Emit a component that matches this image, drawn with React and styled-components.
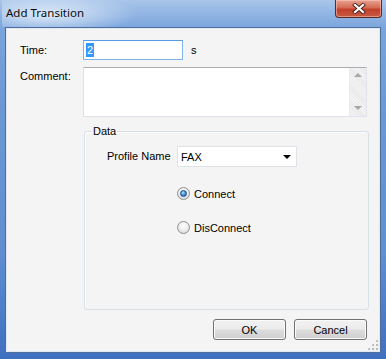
import styled, { createGlobalStyle } from 'styled-components';

const GlobalStyle = createGlobalStyle`
  html, body {
    margin: 0;
    padding: 0;
    background: #ffffff;
  }
  * {
    box-sizing: border-box;
  }
`;

const Window = styled.div`
  position: relative;
  width: 386px;
  height: 359px;
  display: flex;
  flex-direction: column;
  padding: 0 5px 6px 5px;
  background: linear-gradient(180deg, #a9c5ea 0%, #79a4dc 8%, #6b98d4 30%, #5f8fd0 70%, #3f6fbf 100%);
  font-family: 'Liberation Sans', Arial, sans-serif;
  font-size: 11px;
  color: #000;
`;

const TitleBar = styled.div`
  height: 27px;
  display: flex;
  align-items: flex-start;
  justify-content: space-between;
  margin: 0 -1px 0 -3px;
  background: radial-gradient(ellipse 90px 22px at 45px 14px, rgba(235, 243, 252, 0.85), rgba(235, 243, 252, 0) 100%);
`;

const Title = styled.span`
  font-family: 'Noto Sans', 'Open Sans', sans-serif;
  font-size: 11.5px;
  line-height: 16px;
  margin-top: 5px;
  padding-left: 4px;
  color: #0b0b0b;
`;

const CloseButton = styled.div`
  width: 47px;
  height: 18px;
  border: 1px solid #5a2a25;
  border-top: none;
  border-radius: 0 0 4px 4px;
  background: linear-gradient(180deg, #e8a290 0%, #d46b54 45%, #c1402a 55%, #c75a42 100%);
  box-shadow: inset 0 0 0 1px rgba(255, 210, 200, 0.5);
  display: flex;
  align-items: center;
  justify-content: center;
`;

const Client = styled.div`
  position: relative;
  flex: 1;
  background: #f4f4f4;
  border: 1px solid #4d6f9c;
  box-shadow: inset 0 0 0 1px #dfe8f3;
  padding: 12px 13px 0 14px;
  display: flex;
  flex-direction: column;
`;

const Row = styled.div`
  display: flex;
  align-items: ${(p) => (p.$top ? 'flex-start' : 'center')};
  margin-top: ${(p) => p.$gap || 0}px;
`;

const Label = styled.div`
  width: ${(p) => p.$w}px;
  flex: none;
  line-height: 13px;
  padding-top: ${(p) => p.$pt || 0}px;
`;

const TextBox = styled.div`
  width: 100px;
  height: 20px;
  background: #fff;
  border: 1px solid #7eb4ea;
  border-top-color: #569de5;
  display: flex;
  align-items: center;
  padding-left: 2px;
`;

const Selected = styled.span`
  background: #3399ff;
  color: #fff;
  line-height: 14px;
  padding: 0 1px;
`;

const Unit = styled.span`
  margin-left: 8px;
`;

const Memo = styled.div`
  width: 285px;
  height: 50px;
  background: #fff;
  border: 1px solid #e2e3ea;
  border-top-color: #abadb3;
  display: flex;
  justify-content: flex-end;
`;

const ScrollBar = styled.div`
  width: 17px;
  height: 100%;
  display: flex;
  flex-direction: column;
  justify-content: space-between;
  align-items: center;
  padding: 5px 0 6px;
  background: repeating-linear-gradient(45deg, #f3f3f3 0 1px, #e9e9e9 1px 2px);
  border-left: 1px solid #ececec;
`;

const Arrow = styled.div`
  width: 0;
  height: 0;
  border-left: ${(p) => p.$s}px solid transparent;
  border-right: ${(p) => p.$s}px solid transparent;
  ${(p) => (p.$up ? 'border-bottom' : 'border-top')}: ${(p) => p.$h}px solid ${(p) => p.$c};
`;

const Group = styled.fieldset`
  margin: 8px 0 0 64px;
  width: 285px;
  height: 185px;
  padding: 0 0 0 22px;
  border: 1px solid #d5dfe5;
  border-radius: 3px;
  box-shadow: inset 1px 1px 0 #fff;
`;

const Legend = styled.legend`
  margin-left: -16px;
  padding: 0 1px 0 2px;
  line-height: 13px;
  font-size: 11px;
`;

const Combo = styled.div`
  width: 120px;
  height: 21px;
  background: #fff;
  border: 1px solid #dfe3e8;
  display: flex;
  align-items: center;
  justify-content: space-between;
  padding: 0 5px 0 3px;
`;

const RadioRow = styled.div`
  display: flex;
  align-items: center;
  margin: ${(p) => p.$gap}px 0 0 70px;
  height: 13px;
`;

const RadioDot = styled.div`
  width: 13px;
  height: 13px;
  border-radius: 50%;
  border: 1px solid #8e8f8f;
  background: radial-gradient(circle at 50% 35%, #ffffff 0%, #ececec 50%, #cfcfcf 100%);
  display: flex;
  align-items: center;
  justify-content: center;
  margin-right: 4px;

  &::after {
    content: '';
    width: 7px;
    height: 7px;
    border-radius: 50%;
    display: ${(p) => (p.$on ? 'block' : 'none')};
    background: radial-gradient(circle at 40% 35%, #bfe2ff 0%, #4796d8 45%, #1b5ea8 100%);
    border: 1px solid #1f4f8c;
    box-sizing: border-box;
  }
`;

const ButtonBar = styled.div`
  display: flex;
  justify-content: flex-end;
  gap: 8px;
  margin-top: 9px;
`;

const Button = styled.div`
  width: 73px;
  height: 21px;
  border: 1px solid #707070;
  border-radius: 3px;
  background: linear-gradient(180deg, #f2f2f2 0%, #ebebeb 48%, #dddddd 52%, #cfcfcf 100%);
  box-shadow: inset 0 0 0 1px #fbfbfb;
  display: flex;
  align-items: center;
  justify-content: center;
  font-size: 11px;
`;

const Grip = styled.div`
  position: absolute;
  right: 2px;
  bottom: 2px;
  width: 11px;
  height: 11px;
  background-image: radial-gradient(circle, #b9b9b9 0 1px, transparent 1.2px);
  background-size: 4px 4px;
  clip-path: polygon(100% 0, 100% 100%, 0 100%);
`;

function CloseGlyph() {
  return (
    <svg width="14" height="11" viewBox="0 0 14 11">
      <path d="M3 2 L11 9 M11 2 L3 9" stroke="#4b2520" strokeWidth="4" strokeLinecap="square" />
      <path d="M3 2 L11 9 M11 2 L3 9" stroke="#ffffff" strokeWidth="2.2" strokeLinecap="square" />
    </svg>
  );
}

export default function App() {
  return (
    <>
      <GlobalStyle />
      <Window>
        <TitleBar>
          <Title>Add Transition</Title>
          <CloseButton>
            <CloseGlyph />
          </CloseButton>
        </TitleBar>
        <Client>
          <Row>
            <Label $w={63}>Time:</Label>
            <TextBox>
              <Selected>2</Selected>
            </TextBox>
            <Unit>s</Unit>
          </Row>
          <Row $top $gap={7}>
            <Label $w={63} $pt={3}>Comment:</Label>
            <Memo>
              <ScrollBar>
                <Arrow $up $s={4} $h={4} $c="#a8a8a8" />
                <Arrow $s={4} $h={4} $c="#a8a8a8" />
              </ScrollBar>
            </Memo>
          </Row>
          <Group>
            <Legend>Data</Legend>
            <Row $gap={8}>
              <Label $w={70}>Profile Name</Label>
              <Combo>
                <span>FAX</span>
                <Arrow $s={4} $h={4} $c="#000" />
              </Combo>
            </Row>
            <RadioRow $gap={20}>
              <RadioDot $on />
              Connect
            </RadioRow>
            <RadioRow $gap={21}>
              <RadioDot />
              DisConnect
            </RadioRow>
          </Group>
          <ButtonBar>
            <Button>OK</Button>
            <Button>Cancel</Button>
          </ButtonBar>
          <Grip />
        </Client>
      </Window>
    </>
  );
}
